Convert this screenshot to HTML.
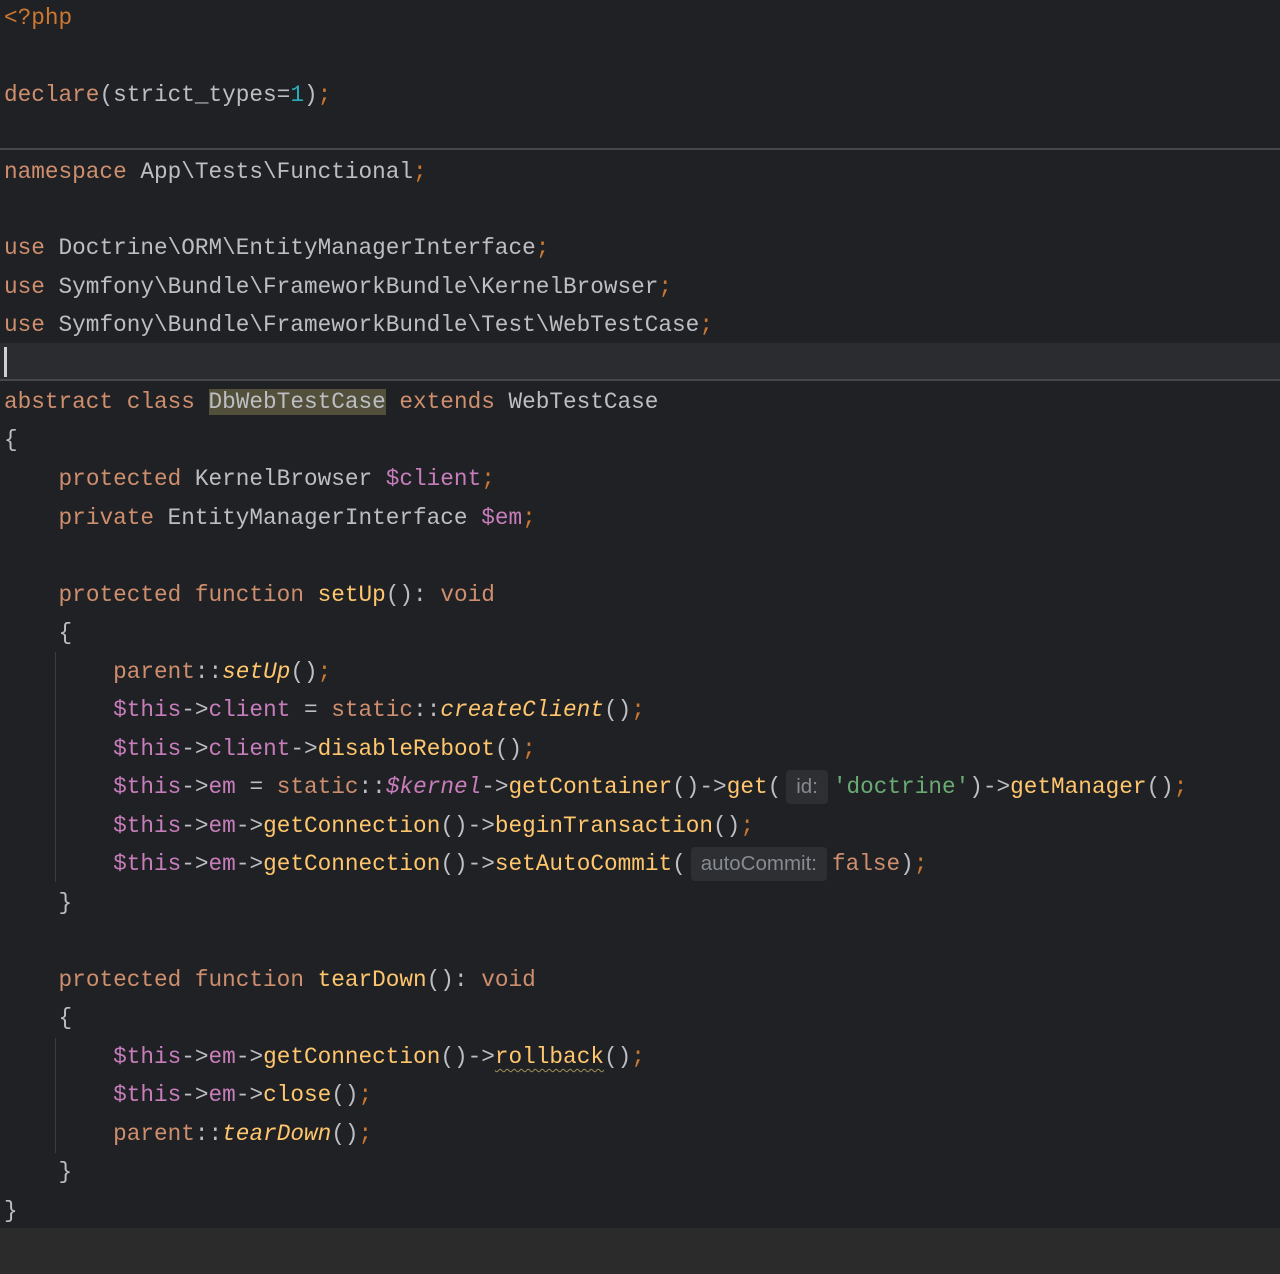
<!DOCTYPE html>
<html><head><meta charset="utf-8"><style>
html,body{margin:0;padding:0;}
body{width:1280px;height:1274px;background:#2b2b2b;position:relative;overflow:hidden;font-family:"Liberation Mono",monospace;}
#ed{position:absolute;left:0;top:0;width:1280px;height:1228px;background:#1f2124;}
.l{position:absolute;left:4px;height:38px;line-height:40px;font-size:22.72px;white-space:pre;color:#bcbec4;}
.k{color:#cf8e6d}.s{color:#cc7832}.f{color:#ffc66d}.v{color:#c77dbb}.g{color:#6aab73}.n{color:#2aacb8}
.i{font-style:italic}
.h{background:#2d2f32;color:#868a91;font-family:"Liberation Sans",sans-serif;font-size:20.5px;padding:0 10px;border-radius:4px;display:inline-block;line-height:34px;margin:0 5px}
.sel{background:#52503a}
.w{text-decoration:underline wavy #a0905a;text-underline-offset:5px;text-decoration-thickness:1px}
</style></head><body>
<div id="ed"></div>
<div style="position:absolute;left:0;top:343px;width:1280px;height:37px;background:#2a2c2f"></div>
<div style="position:absolute;left:0;top:148px;width:1280px;height:2px;background:#45474b"></div>
<div style="position:absolute;left:0;top:379px;width:1280px;height:2px;background:#45474b"></div>
<div style="position:absolute;left:4px;top:347px;width:3px;height:30px;background:#d0d0d0"></div>
<div style="position:absolute;left:55px;top:652px;width:1px;height:230px;background:#3a3c40"></div>
<div style="position:absolute;left:55px;top:1038px;width:1px;height:115px;background:#3a3c40"></div>

<div class="l" style="top:-2px"><span class="s">&lt;?php</span></div>
<div class="l" style="top:75px"><span class="k">declare</span>(strict_types=<span class="n">1</span>)<span class="s">;</span></div>
<div class="l" style="top:152px"><span class="k">namespace</span> App\Tests\Functional<span class="s">;</span></div>
<div class="l" style="top:228px"><span class="k">use</span> Doctrine\ORM\EntityManagerInterface<span class="s">;</span></div>
<div class="l" style="top:267px"><span class="k">use</span> Symfony\Bundle\FrameworkBundle\KernelBrowser<span class="s">;</span></div>
<div class="l" style="top:305px"><span class="k">use</span> Symfony\Bundle\FrameworkBundle\Test\WebTestCase<span class="s">;</span></div>
<div class="l" style="top:382px"><span class="k">abstract class</span> <span class="sel">DbWebTestCase</span> <span class="k">extends</span> WebTestCase</div>
<div class="l" style="top:420px">{</div>
<div class="l" style="top:459px">    <span class="k">protected</span> KernelBrowser <span class="v">$client</span><span class="s">;</span></div>
<div class="l" style="top:498px">    <span class="k">private</span> EntityManagerInterface <span class="v">$em</span><span class="s">;</span></div>
<div class="l" style="top:575px">    <span class="k">protected function</span> <span class="f">setUp</span>(): <span class="k">void</span></div>
<div class="l" style="top:613px">    {</div>
<div class="l" style="top:652px">        <span class="k">parent</span>::<span class="f i">setUp</span>()<span class="s">;</span></div>
<div class="l" style="top:690px">        <span class="v">$this</span>-&gt;<span class="v">client</span> = <span class="k">static</span>::<span class="f i">createClient</span>()<span class="s">;</span></div>
<div class="l" style="top:729px">        <span class="v">$this</span>-&gt;<span class="v">client</span>-&gt;<span class="f">disableReboot</span>()<span class="s">;</span></div>
<div class="l" style="top:767px">        <span class="v">$this</span>-&gt;<span class="v">em</span> = <span class="k">static</span>::<span class="v i">$kernel</span>-&gt;<span class="f">getContainer</span>()-&gt;<span class="f">get</span>(<span class="h">id:</span><span class="g">'doctrine'</span>)-&gt;<span class="f">getManager</span>()<span class="s">;</span></div>
<div class="l" style="top:806px">        <span class="v">$this</span>-&gt;<span class="v">em</span>-&gt;<span class="f">getConnection</span>()-&gt;<span class="f">beginTransaction</span>()<span class="s">;</span></div>
<div class="l" style="top:844px">        <span class="v">$this</span>-&gt;<span class="v">em</span>-&gt;<span class="f">getConnection</span>()-&gt;<span class="f">setAutoCommit</span>(<span class="h">autoCommit:</span><span class="k">false</span>)<span class="s">;</span></div>
<div class="l" style="top:883px">    }</div>
<div class="l" style="top:960px">    <span class="k">protected function</span> <span class="f">tearDown</span>(): <span class="k">void</span></div>
<div class="l" style="top:998px">    {</div>
<div class="l" style="top:1037px">        <span class="v">$this</span>-&gt;<span class="v">em</span>-&gt;<span class="f">getConnection</span>()-&gt;<span class="f w">rollback</span>()<span class="s">;</span></div>
<div class="l" style="top:1075px">        <span class="v">$this</span>-&gt;<span class="v">em</span>-&gt;<span class="f">close</span>()<span class="s">;</span></div>
<div class="l" style="top:1114px">        <span class="k">parent</span>::<span class="f i">tearDown</span>()<span class="s">;</span></div>
<div class="l" style="top:1152px">    }</div>
<div class="l" style="top:1191px">}</div>
</body></html>
